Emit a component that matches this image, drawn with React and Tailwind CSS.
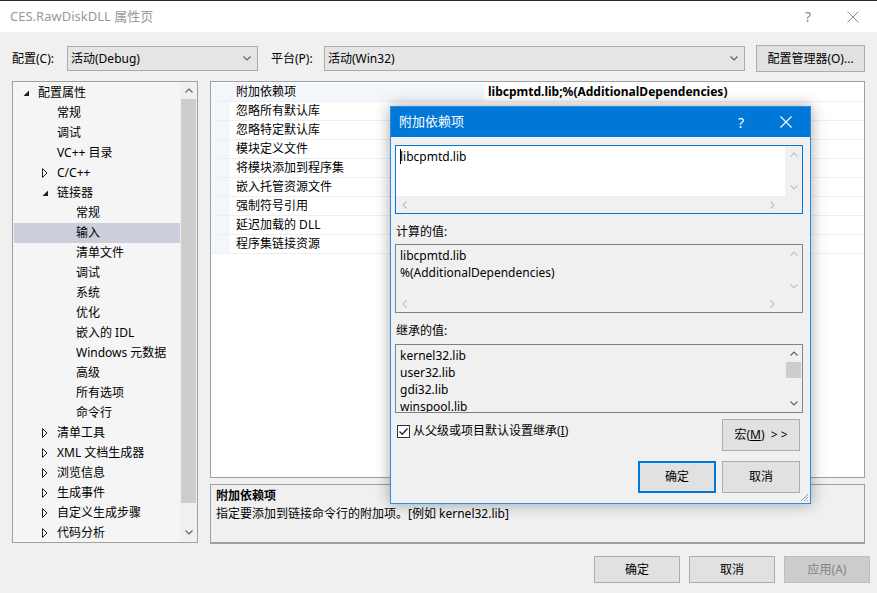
import React from "react";

const font =
  "font-[family-name:'Segoe_UI','Noto_Sans','Noto_Sans_CJK_SC',sans-serif]";

const Chev = ({ dir = "down", color = "#606060", size = 8 }) => {
  const paths = {
    down: "M0.5 1.5 L4 5 L7.5 1.5",
    up: "M0.5 5.5 L4 2 L7.5 5.5",
    left: "M5.5 0.5 L2 4 L5.5 7.5",
    right: "M2.5 0.5 L6 4 L2.5 7.5",
  };
  return (
    <svg width={size} height={size} viewBox="0 0 8 8" fill="none">
      <path d={paths[dir]} stroke={color} strokeWidth="1.1" />
    </svg>
  );
};

const Expanded = () => (
  <svg width="7" height="7" viewBox="0 0 7 7">
    <polygon points="6,0.5 6,6 0.5,6" fill="#1e1e1e" />
  </svg>
);

const Collapsed = () => (
  <svg width="6" height="10" viewBox="0 0 6 10" fill="none">
    <polygon points="0.5,0.5 5,5 0.5,9.5" stroke="#1e1e1e" strokeWidth="1" />
  </svg>
);

const tree = [
  { t: "配置属性", l: 0, a: "open" },
  { t: "常规", l: 1 },
  { t: "调试", l: 1 },
  { t: "VC++ 目录", l: 1 },
  { t: "C/C++", l: 1, a: "closed" },
  { t: "链接器", l: 1, a: "open" },
  { t: "常规", l: 2 },
  { t: "输入", l: 2, sel: true },
  { t: "清单文件", l: 2 },
  { t: "调试", l: 2 },
  { t: "系统", l: 2 },
  { t: "优化", l: 2 },
  { t: "嵌入的 IDL", l: 2 },
  { t: "Windows 元数据", l: 2 },
  { t: "高级", l: 2 },
  { t: "所有选项", l: 2 },
  { t: "命令行", l: 2 },
  { t: "清单工具", l: 1, a: "closed" },
  { t: "XML 文档生成器", l: 1, a: "closed" },
  { t: "浏览信息", l: 1, a: "closed" },
  { t: "生成事件", l: 1, a: "closed" },
  { t: "自定义生成步骤", l: 1, a: "closed" },
  { t: "代码分析", l: 1, a: "closed" },
];

const indents = ["pl-[10px]", "pl-[29px]", "pl-[48px]"];

const props = [
  "附加依赖项",
  "忽略所有默认库",
  "忽略特定默认库",
  "模块定义文件",
  "将模块添加到程序集",
  "嵌入托管资源文件",
  "强制符号引用",
  "延迟加载的 DLL",
  "程序集链接资源",
];

// scrolling text box used in the dialog
const TextBox = ({ lines, focused, readOnly, hscroll = true, thumb }) => (
  <div
    className={`w-[408px] h-[69px] flex flex-col border ${
      focused ? "border-[#0078d7]" : "border-[#828282]"
    }`}
  >
    <div className="flex flex-1 min-h-0">
      <div
        className={`flex-1 pl-[4px] pt-[2px] overflow-hidden leading-[17px] ${
          readOnly ? "bg-[#f0f0f0]" : "bg-white"
        }`}
      >
        {lines.map((l, i) => (
          <div key={i} className="whitespace-nowrap flex items-center">
            {focused && i === 0 && <span className="w-px h-[15px] bg-black -mr-px" />}
            {l}
          </div>
        ))}
      </div>
      <div className="w-[17px] bg-[#f0f0f0] flex flex-col items-center">
        <div className="h-[17px] flex items-center justify-center">
          <Chev dir="up" color={thumb ? "#606060" : "#c0c0c0"} />
        </div>
        <div className="flex-1 w-full px-px">
          {thumb && <div className="h-[16px] bg-[#cdcdcd]" />}
        </div>
        <div className="h-[17px] flex items-center justify-center">
          <Chev dir="down" color={thumb ? "#606060" : "#c0c0c0"} />
        </div>
      </div>
    </div>
    {hscroll && (
      <div className="h-[17px] bg-[#f0f0f0] flex items-center justify-between pl-[5px] pr-[26px]">
        <Chev dir="left" color="#c0c0c0" />
        <Chev dir="right" color="#c0c0c0" />
      </div>
    )}
  </div>
);

const Btn = ({ children, w = "w-[86px]", h = "h-[27px]", className = "" }) => (
  <button
    className={`${w} ${h} bg-[#e1e1e1] border border-[#adadad] flex items-center justify-center text-[12px] text-black ${className}`}
  >
    {children}
  </button>
);

export default function App() {
  return (
    <div
      className={`${font} w-[877px] h-[593px] bg-[#f0f0f0] relative overflow-hidden text-[12px] text-black border-t border-[#2b2b2b]`}
    >
      {/* Title bar */}
      <div className="h-[31px] bg-white flex items-center pl-[10px]">
        <span className="text-[#9a9a9a] text-[13px]">CES.RawDiskDLL 属性页</span>
        <span className="ml-auto text-[#8a8a8a] text-[14px] w-[46px] text-center">?</span>
        <span className="w-[46px] flex justify-center pr-[2px]">
          <svg width="12" height="12" viewBox="0 0 12 12">
            <path d="M0.5 0.5 L11.5 11.5 M11.5 0.5 L0.5 11.5" stroke="#8a8a8a" strokeWidth="1" />
          </svg>
        </span>
      </div>

      {/* Config row */}
      <div className="flex items-center h-[27px] mt-[13px] pl-[12px]">
        <span className="w-[55px]">配置(C):</span>
        <div className="w-[191px] h-[25px] bg-[#e5e5e5] border border-[#acacac] flex items-center pl-[3px] pr-[6px]">
          <span>活动(Debug)</span>
          <span className="ml-auto">
            <Chev />
          </span>
        </div>
        <span className="ml-[13px] w-[53px]">平台(P):</span>
        <div className="w-[421px] h-[25px] bg-[#e5e5e5] border border-[#acacac] flex items-center pl-[3px] pr-[6px]">
          <span>活动(Win32)</span>
          <span className="ml-auto">
            <Chev />
          </span>
        </div>
        <Btn w="w-[109px]" h="h-[27px]" className="ml-[11px]">
          配置管理器(O)...
        </Btn>
      </div>

      {/* Main */}
      <div className="flex mt-[9px] pl-[12px] gap-[12px]">
        {/* Tree */}
        <div className="w-[186px] h-[462px] border border-[#a0a0a0] bg-[#f5f5f5] flex">
          <div className="flex-1 pt-px">
            {tree.map((r, i) => (
              <div
                key={i}
                className={`h-[20px] flex items-center ${indents[r.l]} ${
                  r.sel ? "bg-[#cccedb] ml-px" : ""
                }`}
              >
                <span className="w-[15px] flex items-center">
                  {r.a === "open" && <Expanded />}
                  {r.a === "closed" && <Collapsed />}
                </span>
                <span className={r.sel ? "-ml-px" : ""}>{r.t}</span>
              </div>
            ))}
          </div>
          <div className="w-[17px] flex flex-col bg-[#f0f0f0]">
            <div className="h-[17px] flex items-center justify-center">
              <Chev dir="up" />
            </div>
            <div className="h-[404px] bg-[#cdcdcd] mx-px" />
            <div className="flex-1" />
            <div className="h-[18px] flex items-center justify-center">
              <Chev dir="down" />
            </div>
          </div>
        </div>

        {/* Right column */}
        <div className="w-[655px] flex flex-col gap-[6px]">
          <div className="h-[397px] border border-[#a0a0a0] bg-white pt-px">
            {props.map((p, i) => (
              <div key={i} className="h-[19px] flex border-b border-[#eeeef3]">
                <div className="w-[19px] bg-[#f3f6fb]" />
                <div
                  className={`w-[254px] pl-[6px] flex items-center ${
                    i === 0 ? "bg-[#f3f6fb]" : ""
                  }`}
                >
                  {p}
                </div>
                <div className="flex-1 pl-[4px] flex items-center font-bold">
                  {i === 0 ? "libcpmtd.lib;%(AdditionalDependencies)" : ""}
                </div>
              </div>
            ))}
          </div>
          <div className="h-[60px] border border-[#a0a0a0] border-b-2 bg-[#f0f0f0] pl-[5px] pt-[2px] leading-[18px]">
            <div className="font-bold">附加依赖项</div>
            <div>指定要添加到链接命令行的附加项。[例如 kernel32.lib]</div>
          </div>
        </div>
      </div>

      {/* Bottom buttons */}
      <div className="flex justify-end gap-[9px] pr-[7px] mt-[12px]">
        <Btn w="w-[86px]" h="h-[27px]">确定</Btn>
        <Btn w="w-[86px]" h="h-[27px]">取消</Btn>
        <button className="w-[86px] h-[27px] bg-[#cccccc] border border-[#bfbfbf] text-[#838383] text-[12px]">
          应用(A)
        </button>
      </div>

      {/* Dialog overlay */}
      <div className="absolute left-[390px] top-[105px] w-[421px] h-[398px] bg-[#f0f0f0] border border-[#2a8ee0] shadow-[0_0_14px_rgba(0,0,0,0.35)] flex flex-col">
        <div className="h-[30px] bg-[#0078d7] flex items-center pl-[8px] text-white">
          <span className="text-[13px]">附加依赖项</span>
          <span className="ml-auto w-[46px] text-center text-[14px]">?</span>
          <span className="w-[46px] flex justify-center pr-[2px]">
            <svg width="12" height="12" viewBox="0 0 12 12">
              <path d="M0.5 0.5 L11.5 11.5 M11.5 0.5 L0.5 11.5" stroke="#ffffff" strokeWidth="1.1" />
            </svg>
          </span>
        </div>
        <div className="flex flex-col pl-[4px] pt-[8px]">
          <TextBox lines={["libcpmtd.lib"]} focused />
          <div className="mt-[9px] h-[17px] pl-px">计算的值:</div>
          <div className="mt-[4px]">
            <TextBox
              lines={["libcpmtd.lib", "%(AdditionalDependencies)"]}
              readOnly
            />
          </div>
          <div className="mt-[9px] h-[17px] pl-px">继承的值:</div>
          <div className="mt-[5px]">
            <TextBox
              lines={["kernel32.lib", "user32.lib", "gdi32.lib", "winspool.lib"]}
              readOnly
              hscroll={false}
              thumb
            />
          </div>
          <div className="flex mt-[6px] pr-[10px]">
            <div className="flex items-center h-[24px] pl-[2px] gap-[3px]">
              <span className="w-[13px] h-[13px] border border-[#333] bg-white flex items-center justify-center">
                <svg width="11" height="11" viewBox="0 0 11 11" fill="none">
                  <path d="M1.5 5.5 L4.2 8.3 L9.5 2.5" stroke="#222" strokeWidth="1.3" />
                </svg>
              </span>
              <span>
                从父级或项目默认设置继承(<span className="underline">I</span>)
              </span>
            </div>
            <Btn w="w-[78px]" h="h-[32px]" className="ml-auto">
              宏(<span className="underline">M</span>)&nbsp;&nbsp;&gt; &gt;
            </Btn>
          </div>
          <div className="flex justify-end gap-[6px] pr-[10px] mt-[10px]">
            <button className="w-[78px] h-[32px] bg-[#e1e1e1] border-2 border-[#0078d7] text-[12px]">
              确定
            </button>
            <Btn w="w-[78px]" h="h-[32px]">取消</Btn>
          </div>
        </div>
        <svg className="absolute right-[1px] bottom-[1px]" width="10" height="10" viewBox="0 0 10 10">
          <path d="M9 2 L2 9 M9 5 L5 9 M9 8 L8 9" stroke="#a0a0a0" strokeWidth="1" />
        </svg>
      </div>
    </div>
  );
}
